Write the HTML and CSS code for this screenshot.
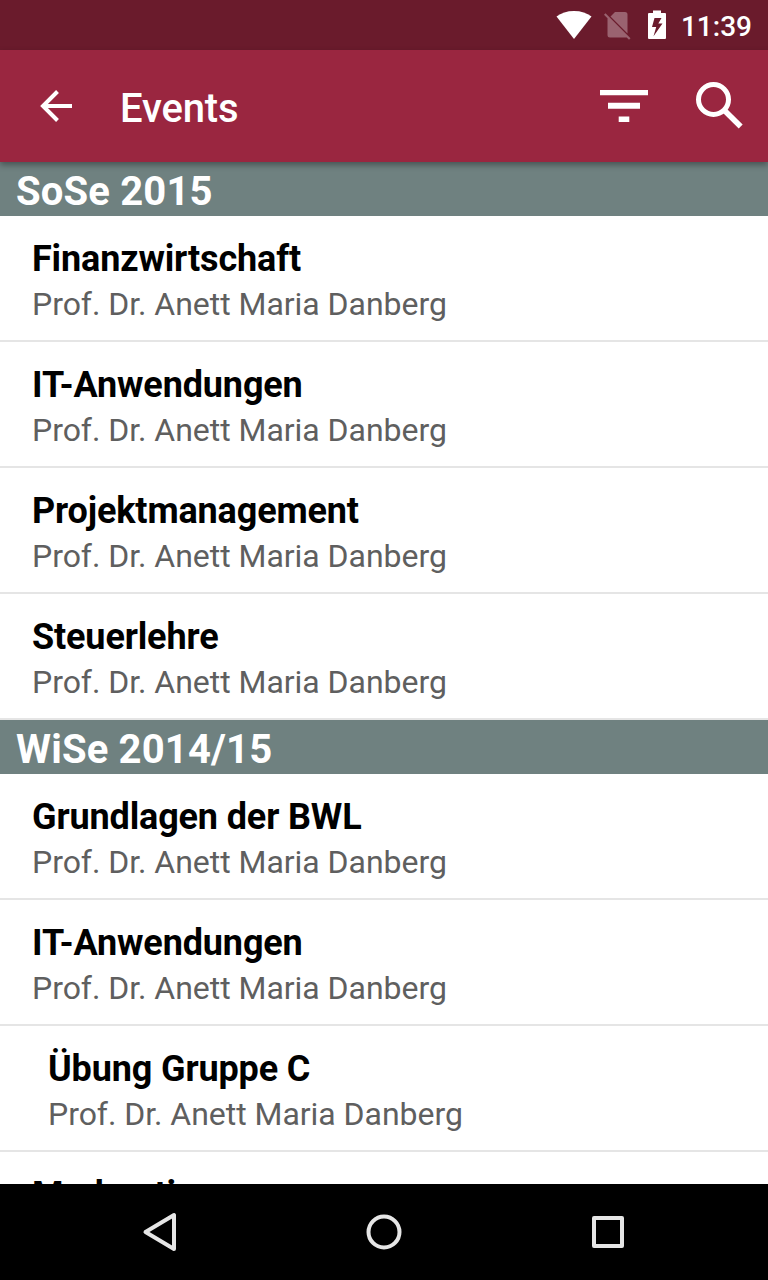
FILE: index.html
```html
<!DOCTYPE html>
<html lang="de">
<head>
    <meta charset="utf-8">
    <title>Events</title>
    <link rel="stylesheet" href="styles.css">
</head>
<body>
    <div class="screen">
        <div class="status-bar">
            <svg class="wifi" width="36" height="30" viewBox="0 0 36 30"><path d="M0.5 6.5C5 3 11 1 18 1s13 2 17.5 5.500L18 29z" fill="#fff"/></svg>
            <svg class="no-sim" width="28" height="30" viewBox="0 0 28 30">
                <path d="M12 2H22a2.500 2.500 0 0 1 2.500 2.500v19L7.500 6.500zM4.500 6.500L25 27.500H7a2.500 2.500 0 0 1-2.500-2.500zM1 4.800L2.500 3.300 27.500 28.300 26 29.800z" fill="#9a6370"/>
            </svg>
            <svg class="battery" width="20" height="30" viewBox="0 0 20 30"><path fill-rule="evenodd" d="M6 0.500h8v2.500h4q1 0 1 1v24q0 1-1 1H2q-1 0-1-1V4q0-1 1-1h4zM7.500 8L5 17h4.200L6.500 26.200 15.500 13.500h-4.200L14.500 8z" fill="#fff"/></svg>
            <span class="clock">11:39</span>
        </div>

        <header class="toolbar">
            <svg width="48" height="48" viewBox="0 0 48 48"><path d="M40 24H10.5M25.500 9.500L11 24l14.500 14.500" fill="none" stroke="#fff" stroke-width="4"/></svg>
            <h1>Events</h1>
            <svg class="filter" width="48" height="48" viewBox="0 0 48 48"><path d="M0 8h48v5.300H0zM8 20.800h32v6H8zM18.700 34.500h10.600v5.500H18.700z" fill="#fff"/></svg>
            <svg width="48" height="48" viewBox="0 0 48 48">
                <circle cx="17.500" cy="17.500" r="15" fill="none" stroke="#fff" stroke-width="5"/>
                <path d="M28.500 28.500L44.700 44.500" stroke="#fff" stroke-width="5.600"/>
            </svg>
        </header>

        <main class="event-list">
            <h2>SoSe 2015</h2>
            <div class="event">
                <div class="event-title">Finanzwirtschaft</div>
                <div class="event-lecturer">Prof. Dr. Anett Maria Danberg</div>
            </div>
            <div class="event">
                <div class="event-title">IT-Anwendungen</div>
                <div class="event-lecturer">Prof. Dr. Anett Maria Danberg</div>
            </div>
            <div class="event">
                <div class="event-title">Projektmanagement</div>
                <div class="event-lecturer">Prof. Dr. Anett Maria Danberg</div>
            </div>
            <div class="event">
                <div class="event-title">Steuerlehre</div>
                <div class="event-lecturer">Prof. Dr. Anett Maria Danberg</div>
            </div>
            <h2>WiSe 2014/15</h2>
            <div class="event">
                <div class="event-title">Grundlagen der BWL</div>
                <div class="event-lecturer">Prof. Dr. Anett Maria Danberg</div>
            </div>
            <div class="event">
                <div class="event-title">IT-Anwendungen</div>
                <div class="event-lecturer">Prof. Dr. Anett Maria Danberg</div>
            </div>
            <div class="event sub-event">
                <div class="event-title">Übung Gruppe C</div>
                <div class="event-lecturer">Prof. Dr. Anett Maria Danberg</div>
            </div>
            <div class="event">
                <div class="event-title">Moderation</div>
            </div>
        </main>

        <nav class="nav-bar">
            <svg width="48" height="48" viewBox="0 0 48 48"><path d="M38 7v34L9.500 24z"/></svg>
            <svg width="48" height="48" viewBox="0 0 48 48"><circle cx="24" cy="24" r="15.500"/></svg>
            <svg width="48" height="48" viewBox="0 0 48 48"><path d="M10 10h28v28H10z"/></svg>
        </nav>
    </div>
</body>
</html>
```
FILE: styles.css
```css
body {
    margin: 0;
    font-family: Roboto, sans-serif;
    background: #fff;
}
.screen {
    display: flex;
    flex-direction: column;
    height: 1280px;
    overflow: hidden;
}
.status-bar {
    display: flex;
    justify-content: flex-end;
    align-items: center;
    flex: none;
    height: 50px;
    box-sizing: border-box;
    padding-right: 16px;
    background: #6a1b2c;
    color: #fff;
}
.no-sim {
    margin-left: 11px;
}
.battery {
    margin-left: 16px;
}
.clock {
    margin-left: 14px;
    padding-top: 3px;
    font-size: 28px;
    font-weight: 500;
}
.toolbar {
    display: flex;
    align-items: center;
    flex: none;
    height: 112px;
    box-sizing: border-box;
    padding: 0 24px 0 32px;
    background: #9a2640;
    color: #fff;
    box-shadow: 0 3px 6px rgba(0,0,0,0.35);
    z-index: 1;
}
.toolbar h1 {
    margin: 0 0 0 40px;
    padding-top: 4px;
    font-size: 40px;
    font-weight: 500;
    letter-spacing: -0.15px;
}
.filter {
    margin-left: auto;
    margin-right: 48px;
}
.event-list {
    flex: 1;
    min-height: 0;
    overflow: hidden;
}
.event-list h2 {
    height: 54px;
    margin: 0;
    padding-left: 16px;
    font-size: 40px;
    font-weight: bold;
    line-height: 60px;
    letter-spacing: 0.17px;
    background: #6f8180;
    color: #fff;
}
.event {
    height: 126px;
    box-sizing: border-box;
    padding: 22px 32px 0;
    border-bottom: 2px solid #e5e5e5;
}
.sub-event {
    padding-left: 48px;
}
.event-title {
    font-size: 36px;
    font-weight: bold;
    line-height: 42px;
    letter-spacing: -0.14px;
    color: #000;
}
.event-lecturer {
    margin-top: 5px;
    font-size: 32px;
    line-height: 38px;
    letter-spacing: -0.04px;
    color: #5f5f5f;
}
.nav-bar {
    display: flex;
    justify-content: center;
    align-items: center;
    gap: 176px;
    flex: none;
    height: 96px;
    background: #000;
}
.nav-bar svg {
    fill: none;
    stroke: #e6e6e6;
    stroke-width: 4;
    stroke-linejoin: round;
}
```
